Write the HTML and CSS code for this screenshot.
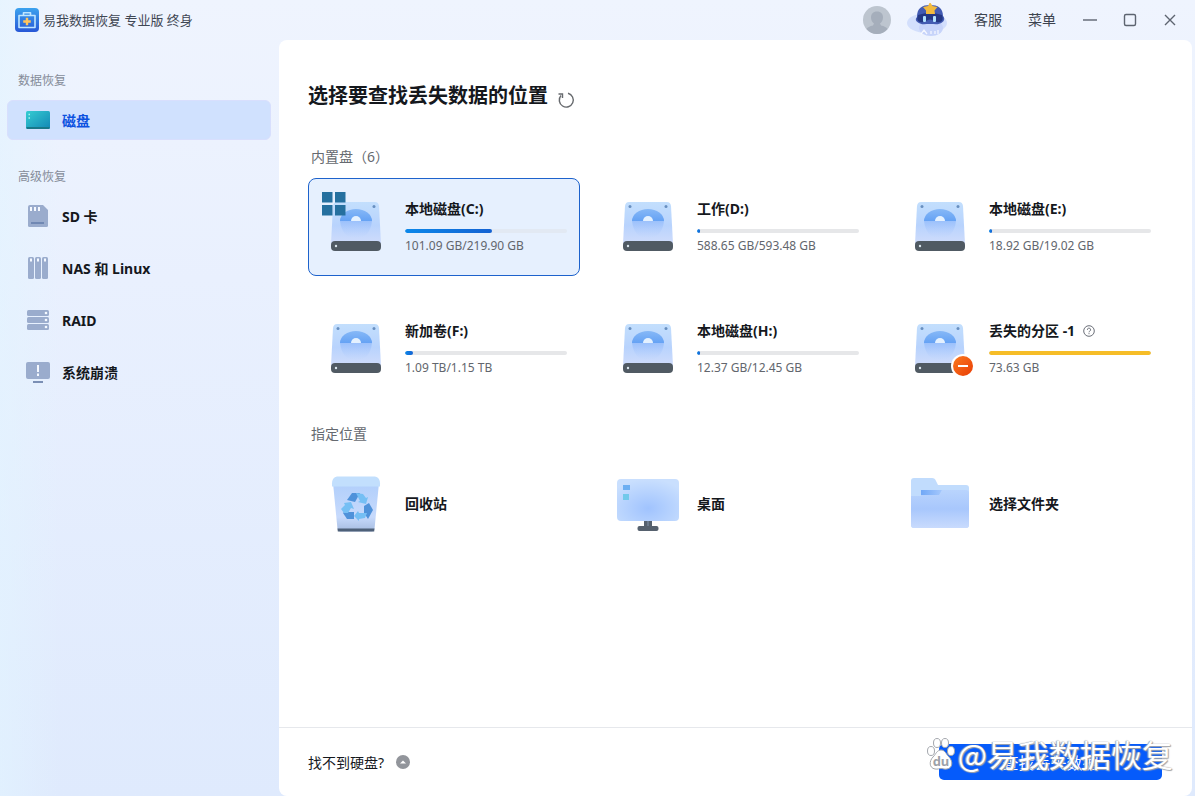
FILE: index.html
```html
<!DOCTYPE html>
<html lang="zh-CN">
<head>
<meta charset="utf-8">
<meta name="viewport" content="width=device-width, initial-scale=1">
<title>易我数据恢复</title>
<link rel="stylesheet" href="styles.css">
</head>
<body>
<svg class="defs" aria-hidden="true">
  <defs>
    <linearGradient id="diskBody" x1="0" y1="0" x2="0" y2="1"><stop offset="0" stop-color="#c3dffd"/><stop offset=".55" stop-color="#b8d3fd"/><stop offset="1" stop-color="#d0dcfb"/></linearGradient>
    <linearGradient id="platter" x1="0" y1="0" x2="0" y2="1"><stop offset="0" stop-color="#86b8f7"/><stop offset="1" stop-color="#65a2f4"/></linearGradient>
    <linearGradient id="platterShade" x1="0" y1="0" x2="0" y2="1"><stop offset="0" stop-color="#93bbfb" stop-opacity=".8"/><stop offset="1" stop-color="#b8d0fd" stop-opacity="0"/></linearGradient>
    <linearGradient id="teal" x1="0" y1="0" x2="1" y2="1"><stop offset="0" stop-color="#35cdd2"/><stop offset="1" stop-color="#1287b5"/></linearGradient>
    <linearGradient id="brand" x1="0" y1="0" x2="0" y2="1"><stop offset="0" stop-color="#3ba2ee"/><stop offset="1" stop-color="#2757d6"/></linearGradient>
    <linearGradient id="binBody" x1="0" y1="0" x2="0" y2="1"><stop offset="0" stop-color="#b1cffb"/><stop offset=".7" stop-color="#c7dafc"/><stop offset="1" stop-color="#a5bbdf"/></linearGradient>
    <linearGradient id="folderBody" x1="0" y1="0" x2="0" y2="1"><stop offset="0" stop-color="#b9d4fd"/><stop offset=".5" stop-color="#a8c7fc"/><stop offset="1" stop-color="#c9dbfd"/></linearGradient>
    <linearGradient id="folderSlot" x1="0" y1="0" x2="1" y2="0"><stop offset="0" stop-color="#71a8f6"/><stop offset="1" stop-color="#a5c8fd"/></linearGradient>
    <radialGradient id="screen" cx=".5" cy=".7" r=".7"><stop offset="0" stop-color="#a0c3fe"/><stop offset="1" stop-color="#c9dffe"/></radialGradient>
    <linearGradient id="warn" x1="0" y1="0" x2="1" y2="1"><stop offset="0" stop-color="#fb7a20"/><stop offset="1" stop-color="#e93d05"/></linearGradient>
  </defs>
  <symbol id="disk" viewBox="0 0 60 60">
    <path d="M11 5h38q3.500 0 4 4l2 38H5L7 9q.5-4 4-4z" fill="url(#diskBody)"/>
    <path d="M14 24h32q-2 17-16 17T14 24z" fill="url(#platterShade)"/>
    <path d="M14 24a16 12 0 0 1 32 0z" fill="url(#platter)"/>
    <path d="M25 24a5 5 0 0 1 10 0z" fill="#e4f1ff"/>
    <circle cx="12" cy="9.500" r="1.500" fill="#688fc0"/><circle cx="48" cy="9.500" r="1.500" fill="#688fc0"/>
    <rect x="5" y="44" width="50" height="10" rx="4" fill="#505a63"/>
    <circle cx="10" cy="49" r="1.200" fill="#dbe6ee"/>
  </symbol>
</svg>

<div class="app">
  <header class="titlebar">
    <svg class="logo" viewBox="0 0 24 24" aria-hidden="true"><rect width="24" height="24" rx="4" fill="url(#brand)"/><path d="M8.500 7V4.800h7V7M4 7.500h16v12H4z" fill="none" stroke="#bfe6ff" stroke-width="1.600" stroke-linejoin="round"/><path d="M12 9.700v7.600M8.200 13.500h7.600" stroke="#ffc45c" stroke-width="2.400"/></svg>
    <span class="app-name">易我数据恢复 专业版 终身</span>
    <div class="title-actions">
      <button class="icon-btn avatar" aria-label="账户"><svg viewBox="0 0 28 28"><circle cx="14" cy="14" r="14" fill="#bdc5cf"/><path d="M14 5.500c4 0 6 2.500 6 6 0 3-1.500 5-3 6l1 2q5 1 6.500 3.500A14 14 0 0 1 14 28 14 14 0 0 1 3.500 23Q5 20.500 10 19.500l1-2c-1.500-1-3-3-3-6 0-3.500 2-6 6-6z" fill="#a5aebb"/></svg></button>
      <button class="icon-btn bot" aria-label="AI 助手"><svg viewBox="0 0 42 34"><ellipse cx="20" cy="20" rx="20" ry="10" fill="#d3dffc"/><ellipse cx="24" cy="25" rx="12" ry="8" fill="#c7d4fa"/><path d="M10 14C10 5 15 2 23 2s13 3 13 11c2 2 1.500 5-1 6.500-3 2.500-7 1.500-12 1.500s-9 1-12-1.500C8.500 18 8 16 10 14z" fill="#435bb2"/><path d="M11 12q12-4 24 0 2 6-2 7-4 1-7-1.500-3-2-6 0Q17 20 13 19q-4-1-2-7z" fill="#243884"/><rect x="16" y="13" width="3" height="6" rx="1" fill="#b2e2ff"/><rect x="26" y="13" width="3" height="6" rx="1" fill="#b2e2ff"/><path d="m23-1 2.500 4 5 1-3 3.500.5 3.500h-9V7.500L16 4l5-1z" fill="#f2ba3e"/><path d="m14 31 3-4 3 4m4 0v-3m4 3v-3m3 3v-4" stroke="#fff" stroke-width="1.300" fill="none" opacity=".8"/></svg></button>
      <button class="text-btn">客服</button>
      <button class="text-btn">菜单</button>
      <div class="window-controls">
        <button class="icon-btn" aria-label="最小化"><svg viewBox="0 0 16 16"><path d="M1 8h14" stroke="#5d6470" stroke-width="1.400"/></svg></button>
        <button class="icon-btn" aria-label="最大化"><svg viewBox="0 0 16 16"><rect x="2.500" y="2.500" width="11" height="11" rx="1.500" fill="none" stroke="#5d6470" stroke-width="1.400"/></svg></button>
        <button class="icon-btn" aria-label="关闭"><svg viewBox="0 0 16 16"><path d="m3 3 10 10M13 3 3 13" stroke="#5d6470" stroke-width="1.400"/></svg></button>
      </div>
    </div>
  </header>

  <nav class="sidebar">
    <h2 class="nav-label">数据恢复</h2>
    <button class="nav-item active"><svg viewBox="0 0 24 24" aria-hidden="true"><rect y="3" width="24" height="18" rx="1.500" fill="url(#teal)"/><path d="M.5 19h23v1q0 1-1 1h-21q-1 0-1-1z" fill="#177889"/><path d="M2.500 6.500h1.500M2.500 10h1.500" stroke="#a5f4ef" stroke-width="1.500"/></svg>磁盘</button>
    <h2 class="nav-label">高级恢复</h2>
    <button class="nav-item"><svg viewBox="0 0 24 24" aria-hidden="true"><path d="M4 1h13l5 5V21.500q0 1.500-1.500 1.500h-17Q2 23 2 21.500V3q0-2 2-2z" fill="#9aaccd"/><path d="M5 3v4M9 3v4M13 3v4" stroke="#f5f9ff" stroke-width="2"/><path d="M5 19h13" stroke="#7088b3" stroke-width="2"/></svg>SD 卡</button>
    <button class="nav-item"><svg viewBox="0 0 24 24" aria-hidden="true"><g fill="#9aaccd"><rect x="2" y="1" width="6" height="22" rx="1.500"/><rect x="9" y="1" width="6" height="22" rx="1.500"/><rect x="16" y="1" width="6" height="22" rx="1.500"/></g><path d="M5 2.500v3M12 2.500v3M19 2.500v3" stroke="#f5f9ff" stroke-width="2"/></svg>NAS 和 Linux</button>
    <button class="nav-item"><svg viewBox="0 0 24 24" aria-hidden="true"><g fill="#9aaccd"><rect x="1" y="2" width="22" height="6" rx="1.500"/><rect x="1" y="9" width="22" height="6" rx="1.500"/><rect x="1" y="16" width="22" height="6" rx="1.500"/></g><g fill="#f5f9ff"><circle cx="20" cy="5" r="1.300"/><circle cx="20" cy="12" r="1.300"/><circle cx="20" cy="19" r="1.300"/></g></svg>RAID</button>
    <button class="nav-item"><svg viewBox="0 0 24 24" aria-hidden="true"><rect y="2" width="24" height="17" rx="2" fill="#9aaccd"/><path d="M12 5v7M12 13.500V16" stroke="#f5f9ff" stroke-width="2"/><path d="M7 22h10" stroke="#7b8fb5" stroke-width="2"/></svg>系统崩溃</button>
  </nav>

  <main class="panel">
    <div class="content">
      <div class="heading">
        <h1>选择要查找丢失数据的位置</h1>
        <button class="icon-btn refresh" aria-label="刷新"><svg viewBox="0 0 18 18"><path d="M11 2.300A7 7 0 1 1 4 4.500" fill="none" stroke="#66696d" stroke-width="1.400"/><path d="M1.500 3h4v4" fill="none" stroke="#66696d" stroke-width="1.400"/></svg></button>
      </div>

      <h2 class="section-label">内置盘（6）</h2>
      <div class="grid">
        <button class="card selected">
          <span class="art"><svg viewBox="0 0 60 60"><use href="#disk"/></svg><svg class="windows-badge" viewBox="0 0 24 24"><path d="M0 0h10.500v10.500H0zM13 0h10.500v10.500H13zM0 13h10.500v10.500H0zM13 13h10.500v10.500H13z" fill="#25709f"/></svg></span>
          <span class="info"><span class="name">本地磁盘(C:)</span><span class="bar"><span class="fill" style="width:54%"></span></span><span class="size">101.09 GB/219.90 GB</span></span>
        </button>
        <button class="card">
          <span class="art"><svg viewBox="0 0 60 60"><use href="#disk"/></svg></span>
          <span class="info"><span class="name">工作(D:)</span><span class="bar"><span class="fill" style="width:2%"></span></span><span class="size">588.65 GB/593.48 GB</span></span>
        </button>
        <button class="card">
          <span class="art"><svg viewBox="0 0 60 60"><use href="#disk"/></svg></span>
          <span class="info"><span class="name">本地磁盘(E:)</span><span class="bar"><span class="fill" style="width:2%"></span></span><span class="size">18.92 GB/19.02 GB</span></span>
        </button>
        <button class="card">
          <span class="art"><svg viewBox="0 0 60 60"><use href="#disk"/></svg></span>
          <span class="info"><span class="name">新加卷(F:)</span><span class="bar"><span class="fill" style="width:5%"></span></span><span class="size">1.09 TB/1.15 TB</span></span>
        </button>
        <button class="card">
          <span class="art"><svg viewBox="0 0 60 60"><use href="#disk"/></svg></span>
          <span class="info"><span class="name">本地磁盘(H:)</span><span class="bar"><span class="fill" style="width:2%"></span></span><span class="size">12.37 GB/12.45 GB</span></span>
        </button>
        <button class="card">
          <span class="art"><svg viewBox="0 0 60 60"><use href="#disk"/></svg><svg class="lost-badge" viewBox="0 0 24 24"><circle cx="12" cy="12" r="12" fill="#fff"/><circle cx="12" cy="12" r="10" fill="url(#warn)"/><path d="M7 12h10" stroke="#fff" stroke-width="2"/></svg></span>
          <span class="info"><span class="name">丢失的分区 -1<svg class="help" viewBox="0 0 12 12"><circle cx="6" cy="6" r="5.300" fill="none" stroke="#6b6f78" stroke-width="1"/><path d="M4.400 4.800a1.600 1.600 0 1 1 2.400 1.300Q6 6.500 6 7.300M6 8.200v1" fill="none" stroke="#6b6f78" stroke-width="1"/></svg></span><span class="bar"><span class="fill lost" style="width:100%"></span></span><span class="size">73.63 GB</span></span>
        </button>
      </div>

      <h2 class="section-label">指定位置</h2>
      <div class="grid">
        <button class="card">
          <span class="art"><svg viewBox="0 0 60 60"><path d="M7 9h46l-4.500 46q-.3 2.500-3 2.500h-31q-2.700 0-3-2.500z" fill="url(#binBody)"/><path d="M11 2.500h38q5 1 5 7v3H6v-3q0-6 5-7z" fill="#c2dffd"/><path d="M11.500 54.500h37l-.3 3H11.800z" fill="#4e6078"/>
            <path d="m21 26 5-7h8l-5 9z" fill="#4f92da"/><path d="m30 19 7 1 3 4 2-1-2 7-8-2 2-1z" fill="#75bff4"/><path d="m38 32 5-3 4 7-5 9-4-6z" fill="#4f92da"/><path d="m32 37 1 2h8l-2 5-6 1v2l-5-5z" fill="#75bff4"/><path d="M18 38h10v7h-7l-4-6z" fill="#4f92da"/><path d="m18 29 7-1 3 7-3-1-3 5h-4l-3-4 4-4z" fill="#75bff4"/></svg></span>
          <span class="info"><span class="name">回收站</span></span>
        </button>
        <button class="card">
          <span class="art wide"><svg viewBox="0 0 62 60"><rect x="0" y="5" width="62" height="42" rx="4" fill="url(#screen)"/><path d="M6 11h7v5H6z" fill="#6daff2"/><path d="M6 20h6v6H6z" fill="#72c9ea"/><path d="M27 47h8v5H27z" fill="#56616e"/><path d="M30.500 47h1v5h-1z" fill="#8194aa"/><rect x="20.500" y="52" width="21" height="5" rx="2" fill="#56616e"/></svg></span>
          <span class="info"><span class="name">桌面</span></span>
        </button>
        <button class="card">
          <span class="art"><svg viewBox="0 0 60 60"><path d="M4 4h18q3 0 4 3l2 4H56q3 0 3 3v37q0 3-3 3H4q-3 0-3-3V7q0-3 3-3z" fill="#c1dcfd"/><path d="M11 16h45q3 0 3 3v32q0 3-3 3H4q-3 0-3-3V22h10z" fill="url(#folderBody)"/><path d="M11 16h21l-3 5H11z" fill="url(#folderSlot)"/></svg></span>
          <span class="info"><span class="name">选择文件夹</span></span>
        </button>
      </div>
    </div>

    <footer class="footer">
      <button class="find-disk">找不到硬盘?<svg viewBox="0 0 14 14" aria-hidden="true"><circle cx="7" cy="7" r="7" fill="#92959b"/><path d="m4 8.500 3-3 3 3z" fill="#fff"/></svg></button>
      <button class="primary">查找丢失数据</button>
      <div class="watermark">
        <svg viewBox="0 0 28 32" aria-hidden="true"><g fill="#fff" stroke="#a3a7ad" stroke-width="1"><ellipse cx="4" cy="13" rx="3.500" ry="4.500"/><ellipse cx="10" cy="5" rx="3.500" ry="4.500"/><ellipse cx="18" cy="5" rx="3.500" ry="4.500"/><ellipse cx="24" cy="13" rx="3.500" ry="4.500"/><path d="M14 12c4 0 5 4 8 7 4 4 4 11-2 12-3 .5-4-.5-6-.5s-3 1-6 .5c-6-1-6-8-2-12 3-3 4-7 8-7z"/></g><text class="paw-text" x="14" y="28" text-anchor="middle">du</text></svg>
        <span>@易我数据恢复</span>
      </div>
    </footer>
  </main>
</div>
</body>
</html>
```

FILE: styles.css
```css
* { box-sizing: border-box; }

body {
  margin: 0;
  font-family: "Noto Sans", "Noto Sans CJK SC", sans-serif;
  font-size: 14px;
  color: #15181d;
}

h1, h2 { margin: 0; }

button {
  border: 0;
  padding: 0;
  background: none;
  font: inherit;
  color: inherit;
  text-align: left;
  cursor: pointer;
}

svg { display: block; }

.defs { position: absolute; width: 0; height: 0; }

.app {
  display: grid;
  grid-template: 40px 1fr / 279px 1fr;
  min-height: 100vh;
  padding-right: 3px;
  background:
    linear-gradient(90deg, rgba(226, 244, 255, 0.6), rgba(230, 240, 255, 0) 60px),
    linear-gradient(180deg, #eff4fe, #e9f0fe 35%, #dfeafd);
}

.titlebar {
  grid-column: 1 / -1;
  display: flex;
  align-items: center;
  padding: 0 12px 0 15px;
}

.logo { width: 24px; height: 24px; }

.app-name {
  margin-left: 4px;
  font-size: 13px;
  line-height: 20px;
  color: #3f4754;
}

.title-actions {
  display: flex;
  align-items: center;
  margin-left: auto;
  color: #3c434f;
}

.avatar svg { width: 28px; height: 28px; }
.bot { margin: 0 25px 0 16px; }
.bot svg { width: 42px; height: 34px; }
.text-btn { margin-right: 26px; line-height: 20px; }
.window-controls { display: flex; gap: 24px; margin-right: 2px; }
.window-controls svg { width: 16px; height: 16px; }

.sidebar {
  display: flex;
  flex-direction: column;
  gap: 10px;
  padding: 31px 8px 0 7px;
}

.nav-label {
  padding-left: 11px;
  margin-bottom: -1px;
  font-size: 12px;
  font-weight: 400;
  line-height: 20px;
  color: #858c99;
}

.nav-item + .nav-label { margin-top: 17px; }
.nav-item + .nav-item { margin-top: 2px; }

.nav-item {
  display: flex;
  align-items: center;
  gap: 12px;
  height: 40px;
  padding-left: 18px;
  border: 1px solid transparent;
  border-radius: 6px;
  font-weight: 700;
}

.nav-item svg { width: 24px; height: 24px; }

.nav-item.active {
  background: #d0e1fe;
  border-color: #d8dffd;
  color: #0d52e0;
}

.panel {
  display: flex;
  flex-direction: column;
  min-width: 0;
  background: #fff;
  border-radius: 8px;
}

.content { flex: 1; padding: 42px 28px 24px 29px; }

.heading { display: flex; align-items: center; gap: 9px; }
.heading h1 { font-size: 20px; font-weight: 700; line-height: 28px; }
.refresh { padding-top: 8px; }
.refresh svg { width: 18px; height: 18px; }

.section-label {
  margin: 26px 0 11px 3px;
  font-size: 14px;
  font-weight: 400;
  line-height: 20px;
  color: #666a70;
}

.heading + .section-label { margin-top: 37px; }

.grid {
  display: grid;
  grid-template-columns: repeat(3, 1fr);
  gap: 24px 20px;
}

.card {
  display: flex;
  align-items: center;
  gap: 19px;
  height: 98px;
  padding: 0 12px 0 17px;
  border: 1px solid transparent;
  border-radius: 8px;
}

.card.selected { background: #e6f0fe; border-color: #1d62cc; }

.art { position: relative; flex: none; width: 60px; height: 60px; }
.art > svg { width: 60px; height: 60px; }
.art.wide { width: 62px; margin: 0 -1px; }
.art.wide > svg { width: 62px; }

.art > .windows-badge { position: absolute; top: -5px; left: -4px; width: 24px; height: 24px; }
.art > .lost-badge { position: absolute; right: -5px; bottom: 1px; width: 24px; height: 24px; }

.info { display: flex; flex-direction: column; flex: 1; min-width: 0; }
.name { display: flex; align-items: center; font-weight: 700; line-height: 20px; }
.help { width: 12px; height: 12px; margin-left: 8px; }

.bar {
  height: 4px;
  margin: 10px 0 4px;
  overflow: hidden;
  background: #e6e7e9;
  border-radius: 2px;
}

.selected .bar { background: #e2e9f3; }

.fill {
  display: block;
  height: 100%;
  border-radius: 2px;
  background: linear-gradient(90deg, #0c88ea, #1462d2);
}

.fill.lost { background: #f6bd27; }
.size { font-size: 12px; line-height: 18px; color: #62666d; }

.footer {
  position: relative;
  display: flex;
  align-items: center;
  justify-content: space-between;
  height: 69px;
  padding: 0 30px 0 29px;
  border-top: 1px solid #e6e8ec;
}

.find-disk { display: flex; align-items: center; gap: 12px; }
.find-disk svg { width: 14px; height: 14px; }

.primary {
  width: 223px;
  height: 36px;
  border-radius: 5px;
  background: #055bfb;
  color: #fff;
  font-size: 16px;
  text-align: center;
}

.watermark {
  position: absolute;
  right: 19px;
  top: 4px;
  display: flex;
  align-items: center;
  gap: 3px;
  color: #fff;
  font-family: "Noto Sans CJK SC", sans-serif;
  font-size: 31px;
  line-height: 44px;
  text-shadow: 0 0 1px #85898f, 1px 1px 1px #a5a8ad, -1px 0 1px #b5b8bd;
  pointer-events: none;
}

.watermark svg { width: 28px; height: 32px; }
.paw-text { font: 700 13px "Noto Sans", sans-serif; fill: #9da2a8; text-shadow: none; }
```
